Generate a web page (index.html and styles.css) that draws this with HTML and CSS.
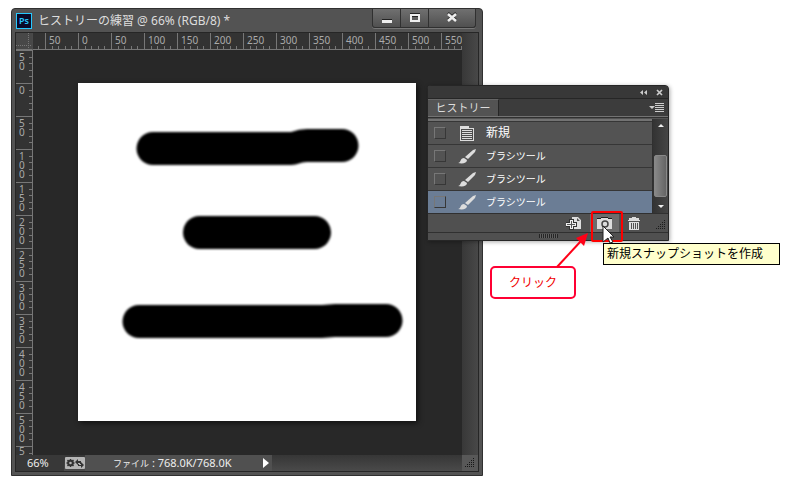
FILE: index.html
```html
<!DOCTYPE html>
<html lang="ja">
<head>
<meta charset="utf-8">
<title>ヒストリーの練習</title>
<link rel="stylesheet" href="styles.css">
</head>
<body>
<main class="desktop">
  <section class="window">
    <header class="titlebar">
      <span class="app-icon">Ps</span>
      <h1 class="title">ヒストリーの練習 @ 66% (RGB/8) *</h1>
      <div class="window-buttons">
        <button type="button" aria-label="最小化"><svg width="12" height="12" viewBox="0 0 12 12"><path fill="#222" d="M1 7h10v1H1z"/><path fill="#eee" d="M1 8h10v3H1z"/></svg></button>
        <button type="button" aria-label="最大化"><svg width="12" height="12" viewBox="0 0 12 12"><path fill="#222" d="M1 1h10v1H1z"/><path fill="#eee" fill-rule="evenodd" d="M1 2h10v8H1zM3 4v4h6V4z"/><path fill="#222" d="M3 4h6v1H3z"/></svg></button>
        <button type="button" class="wide" aria-label="閉じる"><svg width="12" height="12" viewBox="0 0 12 12"><path stroke="#222" stroke-width="2.500" d="M2 1l8 7M10 1L2 8"/><path stroke="#eee" stroke-width="2.500" d="M2 2l8 7M10 2L2 9"/></svg></button>
      </div>
    </header>
    <div class="workspace">
      <div class="ruler-corner"></div>
      <div class="ruler-x">
        <span class="lead"></span><span>50</span><span>0</span><span>50</span><span>100</span><span>150</span><span>200</span><span>250</span><span>300</span><span>350</span><span>400</span><span>450</span><span>500</span><span>550</span>
      </div>
      <div class="track-y"></div>
      <div class="ruler-y">
        <span>50</span><span>0</span><span>50</span><span>100</span><span>150</span><span>200</span><span>250</span><span>300</span><span>350</span><span>400</span><span>450</span><span>500</span><span class="last">5</span>
      </div>
      <div class="pasteboard">
        <svg class="paper" width="338" height="338" viewBox="0 0 338 338" role="img" aria-label="キャンバス">
          <defs><filter id="soft" x="-5%" y="-20%" width="110%" height="140%"><feGaussianBlur stdDeviation="1"/></filter></defs>
          <rect width="338" height="338" fill="#fff"/>
          <g filter="url(#soft)">
            <path d="M75 49H213Q221 46 229 46H264a16.500 16.500 0 0 1 0 33H229C222 79 220 82 213 82H75a16.500 16.500 0 0 1 0-33z"/>
            <rect x="105" y="133" width="148" height="33" rx="16.500"/>
            <path d="M61 222H244L257 221H308a16.500 16.500 0 0 1 0 33H257L244 255H61a16.500 16.500 0 0 1 0-33z"/>
          </g>
        </svg>
      </div>
      <footer class="status">
        <input class="zoom" type="text" value="66%" aria-label="ズーム">
        <button class="sync" type="button" aria-label="同期設定">
          <svg width="20" height="12" viewBox="0 0 20 12"><circle cx="5.500" cy="6" r="2.300" fill="none" stroke="#333" stroke-width="2"/><path stroke="#333" stroke-width="1.500" d="M5.500 2v2M5.500 8v2M1.500 6h2M7.500 6h2M2.500 3l1.500 1.500M7 7.500L8.500 9M8.500 3L7 4.500M4 7.500L2.500 9"/><path fill="#333" d="M10 5l3-3v2h3v3h-1V6h-2v2zM19 8l-3 3V9h-3V7h1v1h2V5z"/></svg>
        </button>
        <span class="file-info"><span class="file-label">ファイル</span> : 768.0K/768.0K</span>
        <button class="more" type="button" aria-label="情報メニュー"><svg width="7" height="10" viewBox="0 0 7 10"><path fill="#fff" d="M0 0l6 5-6 5z"/></svg></button>
      </footer>
      <div class="sizer">
        <svg width="16" height="16" viewBox="0 0 16 16" fill="#161616"><path d="M11 3h1v1h-1zM9 5h1v1H9zM11 5h1v1h-1zM7 7h1v1H7zM9 7h1v1H9zM11 7h1v1h-1zM5 9h1v1H5zM7 9h1v1H7zM9 9h1v1H9zM11 9h1v1h-1zM3 11h1v1H3zM5 11h1v1H5zM7 11h1v1H7zM9 11h1v1H9zM11 11h1v1h-1z"/></svg>
      </div>
    </div>
  </section>

  <section class="panel">
    <header class="panel-top">
      <button type="button" aria-label="パネルを折りたたむ"><svg width="8" height="7" viewBox="0 0 8 7" fill="#ccc"><path d="M4 1v5L1 3.500zM8 1v5L5 3.500z"/></svg></button>
      <button type="button" aria-label="パネルを閉じる"><svg width="7" height="7" viewBox="0 0 7 7"><path stroke="#ccc" stroke-width="1.700" d="M1 1l5 5M6 1L1 6"/></svg></button>
    </header>
    <div class="tabs">
      <button class="tab" type="button">ヒストリー</button>
      <button class="panel-menu" type="button" aria-label="パネルメニュー"><svg width="15" height="9" viewBox="0 0 15 9" fill="#ccc"><path d="M0 3h6L3 6zM6 0h9v1H6zM6 2h9v1H6zM6 4h9v1H6zM6 6h9v1H6zM6 8h9v1H6z"/></svg></button>
    </div>
    <div class="history">
      <ul class="states">
        <li><input type="checkbox" aria-label="新規"><svg class="icon" width="18" height="17" viewBox="0 0 18 17"><path fill="#ddd" d="M2 1h9v2h5v13H2z"/><path fill="#4c4c4c" d="M3 4h12v11H3z"/><path fill="#ddd" d="M4 5h10v1H4zM4 7h10v1H4zM4 9h10v1H4zM4 11h10v1H4zM4 13h10v1H4z"/></svg><span>新規</span></li>
        <li><input type="checkbox" aria-label="ブラシツール 1"><svg class="icon" width="18" height="17" viewBox="0 0 18 17"><path fill="#ddd" d="M18 1l-1 3-7 7-3-2 8-7zM6 10l3 2c0 3-4 4-9 3 3 0 2-5 6-5z"/></svg><span class="tool">ブラシツール</span></li>
        <li><input type="checkbox" aria-label="ブラシツール 2"><svg class="icon" width="18" height="17" viewBox="0 0 18 17"><path fill="#ddd" d="M18 1l-1 3-7 7-3-2 8-7zM6 10l3 2c0 3-4 4-9 3 3 0 2-5 6-5z"/></svg><span class="tool">ブラシツール</span></li>
        <li class="selected"><input type="checkbox" aria-label="ブラシツール 3"><svg class="icon" width="18" height="17" viewBox="0 0 18 17"><path fill="#ddd" d="M18 1l-1 3-7 7-3-2 8-7zM6 10l3 2c0 3-4 4-9 3 3 0 2-5 6-5z"/></svg><span class="tool">ブラシツール</span></li>
      </ul>
      <div class="scroll">
        <svg width="6" height="3" viewBox="0 0 6 3"><path fill="#eee" d="M0 3l3-3 3 3z"/></svg>
        <div class="thumb"></div>
        <svg width="6" height="3" viewBox="0 0 6 3"><path fill="#eee" d="M0 0l3 3 3-3z"/></svg>
      </div>
    </div>
    <footer class="actions">
      <button type="button" class="new-doc" aria-label="新規ドキュメントを作成"><svg width="15" height="13" viewBox="0 0 15 13"><path fill="#ddd" fill-rule="evenodd" d="M6 0h6l3 3v9H6zM11 1v3h3z"/><path fill="#333" d="M3 2h5v3h3v5H8v3H3v-3H0V5h3z"/><path fill="#eee" d="M4 3h3v3h3v3H7v3H4V9H0V6h4z"/><path fill="#555" d="M5 4h1v3h3v1H6v3H5V8H1V7h4z"/></svg></button>
      <button type="button" class="hot" aria-label="新規スナップショットを作成"><svg width="15" height="13" viewBox="0 0 15 13"><path fill="#222" d="M0 1h4V0h7v1h4v2H0z"/><path fill="#ddd" d="M0 2h4V1h7v1h4v10H0z"/><circle cx="8" cy="7" r="3" fill="#ddd" stroke="#444" stroke-width="1.500"/></svg></button>
      <button type="button" aria-label="削除"><svg width="12" height="13" viewBox="0 0 12 13"><path fill="#ddd" fill-rule="evenodd" d="M4 0h4v1h3v2h1v1H0V3h1V1h3zM1 5h10v8H1zM3 6v6h1V6zM5 6v6h1V6zM7 6v6h1V6zM9 6v6h1V6z"/></svg></button>
      <svg class="corner" width="10" height="10" viewBox="0 0 10 10" fill="#1c1c1c"><path d="M8 0h1v1H8zM6 2h1v1H6zM8 2h1v1H8zM4 4h1v1H4zM6 4h1v1H6zM8 4h1v1H8zM2 6h1v1H2zM4 6h1v1H4zM6 6h1v1H6zM8 6h1v1H8zM0 8h1v1H0zM2 8h1v1H2zM4 8h1v1H4zM6 8h1v1H6zM8 8h1v1H8z"/></svg>
    </footer>
    <div class="grip"><span></span></div>
  </section>

  <p class="callout">クリック</p>
  <svg class="arrow" width="34" height="36" viewBox="0 0 34 36"><path stroke="#ff0017" stroke-width="2" d="M2 34L26 8"/><path fill="#ff0017" d="M33 0l-4 13-8-8z"/></svg>
  <div class="highlight"></div>
  <svg class="cursor" width="13" height="19" viewBox="0 0 13 19"><path fill="#fff" stroke="#222" d="M1 1l11 11H8l3 5-3 1-2-5-5 4z"/></svg>
  <p class="tooltip" role="tooltip">新規スナップショットを作成</p>
</main>
</body>
</html>
```
FILE: styles.css
```css
* {
  box-sizing: border-box;
}

body {
  margin: 0;
  background: #fff;
  color: #eee;
  font-family: "Noto Sans", "Noto Sans CJK JP", sans-serif;
  font-size: 12px;
  line-height: 16px;
}

button,
input {
  margin: 0;
  padding: 0;
  border: 0;
  background: none;
  color: inherit;
  font: inherit;
}

button {
  display: flex;
  align-items: center;
  justify-content: center;
}

svg {
  display: block;
  flex: none;
}

p,
h1,
ul {
  margin: 0;
  padding: 0;
  list-style: none;
}

.desktop {
  position: relative;
  min-height: 100vh;
  overflow: hidden;
}

/* document window */
.window {
  position: absolute;
  inset: 8px 302px 14px 11px;
  display: flex;
  flex-direction: column;
  padding: 0 3px 3px;
  border: 1px solid #303030;
  border-radius: 4px 4px 0 0;
  background: #535353;
}

.titlebar {
  display: flex;
  align-items: flex-start;
  height: 23px;
}

.app-icon {
  width: 16px;
  height: 16px;
  margin: 4px 6px 0 1px;
  border: 1px solid #26c9ff;
  background: #0a0a28;
  color: #26c9ff;
  font-size: 9px;
  font-weight: 600;
  line-height: 14px;
  text-align: center;
}

.title {
  flex: 1;
  padding-top: 4px;
  color: #ddd;
  font-size: 12px;
  font-weight: 400;
  white-space: nowrap;
}

.window-buttons {
  display: flex;
  height: 19px;
  margin-right: 3px;
  border: 1px solid #303030;
  border-top: 0;
  border-radius: 0 0 3px 3px;
  box-shadow: 0 1px #777;
  background: linear-gradient(#707070, #505050);
}

.window-buttons button {
  width: 28px;
  border-right: 1px solid #303030;
}

.window-buttons button.wide {
  width: 46px;
  border: 0;
}

.workspace {
  flex: 1;
  display: grid;
  grid-template-columns: 17px 1fr 16px;
  grid-template-rows: 17px 1fr 16px;
  min-height: 0;
  border: 1px solid #262626;
  background: #282828;
}

.ruler-corner {
  border-right: 1px solid #4a4a4a;
  border-bottom: 1px solid #777;
  background:
    repeating-linear-gradient(90deg, #777 0 1px, transparent 1px 2px) 0 12px / 100% 1px no-repeat,
    repeating-linear-gradient(#777 0 1px, transparent 1px 2px) 12px 0 / 1px 100% no-repeat,
    #484848;
}

.ruler-x,
.ruler-y {
  display: flex;
  overflow: hidden;
  color: #aaa;
  background: #333;
  font-size: 10px;
}

.ruler-x {
  border-bottom: 1px solid #777;
}

.ruler-x span {
  flex: none;
  width: 33px;
  padding-left: 3px;
  border-left: 1px solid #777;
  line-height: 14px;
  background:
    linear-gradient(#777, #777) 6px 100% / 1px 3px no-repeat,
    linear-gradient(#777, #777) 12px 100% / 1px 3px no-repeat,
    linear-gradient(#777, #777) 19px 100% / 1px 3px no-repeat,
    linear-gradient(#777, #777) 25px 100% / 1px 3px no-repeat;
}

.ruler-x span.lead {
  width: 12px;
  padding: 0;
  border: 0;
  background: linear-gradient(#777, #777) 5px 100% / 1px 3px no-repeat;
}

.ruler-y {
  flex-direction: column;
  border-right: 1px solid #777;
}

.ruler-y span {
  flex: none;
  height: 33px;
  padding: 2px 7px 0 3px;
  border-top: 1px solid #777;
  line-height: 9px;
  word-break: break-all;
  background:
    linear-gradient(#777, #777) 100% 6px / 3px 1px no-repeat,
    linear-gradient(#777, #777) 100% 12px / 3px 1px no-repeat,
    linear-gradient(#777, #777) 100% 19px / 3px 1px no-repeat,
    linear-gradient(#777, #777) 100% 25px / 3px 1px no-repeat;
}

.ruler-y span.last {
  height: 9px;
  padding-top: 0;
}

.track-y {
  grid-row: 1 / 3;
  grid-column: 3;
  background: linear-gradient(90deg, #383838, #484848);
}

.pasteboard {
  padding: 33px 45px;
  overflow: hidden;
}

.paper {
  box-shadow: 2px 2px 5px #111;
}

.status {
  grid-column: 1 / 3;
  display: flex;
  align-items: center;
  background: linear-gradient(#363636, #4a4a4a);
}

.zoom {
  width: 48px;
  height: 16px;
  padding-left: 11px;
  background: #383838;
  color: #eee;
  font-size: 11px;
}

.sync {
  width: 20px;
  height: 12px;
  margin-left: 1px;
  border-radius: 1px;
  background: #b5b5b5;
}

.file-info {
  height: 16px;
  padding: 0 29px 0 28px;
  background: #505050;
  color: #eee;
  font-size: 11px;
  white-space: nowrap;
}

.file-label {
  font-size: 9px;
}

.more {
  width: 11px;
  height: 16px;
  background: #505050;
}

.sizer {
  background: #585858;
}

/* history panel */
.panel {
  position: absolute;
  left: 427px;
  top: 85px;
  width: 242px;
  border: 1px solid #262626;
  border-radius: 4px 4px 0 0;
  background: #535353;
  box-shadow: 1px 1px 4px #0005;
}

.panel-top {
  display: flex;
  align-items: center;
  justify-content: flex-end;
  gap: 9px;
  height: 12px;
  padding-right: 5px;
  background: #383838;
}

.tabs {
  display: flex;
  align-items: flex-start;
  justify-content: space-between;
  height: 19px;
  border-top: 1px solid #262626;
  border-bottom: 1px solid #737373;
  background: #3c3c3c;
}

.tab {
  width: 71px;
  height: 17px;
  border-top: 1px solid #666;
  border-right: 1px solid #262626;
  background: #535353;
  color: #ddd;
  font-size: 11px;
  white-space: nowrap;
}

.panel-menu {
  height: 17px;
  padding-right: 4px;
}

.history {
  display: grid;
  grid-template-columns: 1fr 16px;
  padding-top: 1px;
  border-top: 1px solid #303030;
}

.states {
  border-top: 2px solid #737373;
}

.states li {
  display: flex;
  align-items: center;
  height: 23px;
  padding-left: 6px;
  border-top: 1px solid #363636;
  color: #fff;
}

.states .selected {
  background: #6b7d95;
}

.states input {
  appearance: none;
  width: 12px;
  height: 12px;
  border: 1px solid #373737;
  border-top-color: #777;
  border-left-color: #777;
}

.states .icon {
  margin: 0 10px 0 12px;
}

.states .tool {
  font-size: 10px;
}

.scroll {
  display: flex;
  flex-direction: column;
  align-items: center;
  padding: 5px 0;
  border-left: 1px solid #303030;
  background: linear-gradient(90deg, #333, #454545);
}

.thumb {
  width: 13px;
  height: 42px;
  margin: auto 0 8px;
  border: 1px solid #888;
  border-radius: 2px;
  background: linear-gradient(90deg, #888, #656565);
}

.actions {
  display: flex;
  align-items: center;
  justify-content: flex-end;
  height: 20px;
  padding-right: 2px;
  border-top: 1px solid #303030;
  border-bottom: 1px solid #303030;
  background: #505050;
}

.actions button {
  width: 29px;
  height: 18px;
}

.actions .new-doc {
  margin-right: 2px;
}

.actions .hot {
  background: #6c6c6c;
}

.corner {
  align-self: flex-end;
  margin: 0 0 2px 8px;
}

.grip {
  display: flex;
  justify-content: center;
  height: 7px;
  padding-top: 1px;
  background: #505050;
}

.grip span {
  width: 19px;
  height: 4px;
  background: repeating-linear-gradient(90deg, #252525 0 1px, #606060 1px 2px);
}

/* annotations over the panel */
.callout {
  position: absolute;
  left: 490px;
  top: 266px;
  padding: 6px 17px;
  border: 2px solid #ff0033;
  border-radius: 5px;
  background: #fff;
  color: #f00000;
  line-height: 17px;
}

.arrow {
  position: absolute;
  left: 555px;
  top: 233px;
}

.highlight {
  position: absolute;
  left: 591px;
  top: 211px;
  width: 32px;
  height: 31px;
  border: 2px solid #f00;
  border-radius: 2px;
}

.cursor {
  position: absolute;
  left: 602px;
  top: 225px;
}

.tooltip {
  position: absolute;
  left: 603px;
  top: 243px;
  padding: 2px 16px 2px 3px;
  border: 1px solid #000;
  background: #ffffcc;
  color: #000;
  white-space: nowrap;
}
```
